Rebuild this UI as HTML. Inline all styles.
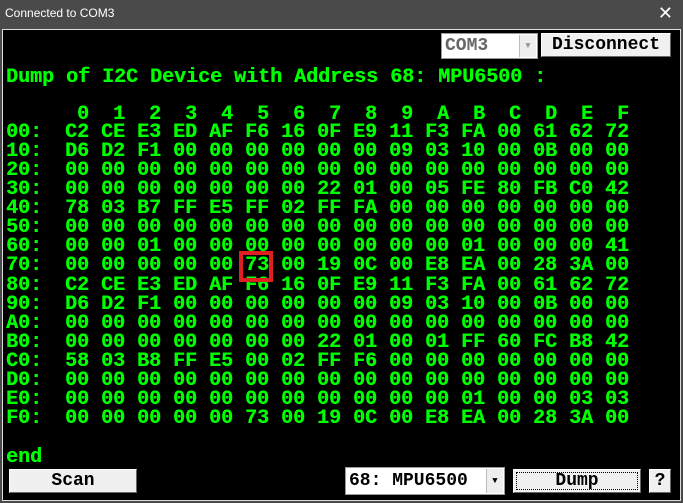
<!DOCTYPE html><html><head><style>
body{margin:0;width:683px;height:503px;background:#4a4a4a;position:relative;overflow:hidden;font-family:"Liberation Mono",monospace}
#t{position:absolute;left:5px;top:6px;color:#fff;font:12px "Liberation Sans",sans-serif}
#x{position:absolute;right:10px;top:3px;color:#fff;font:18px "Liberation Sans",sans-serif}
#f{position:absolute;left:2px;top:29px;width:677px;height:470px;border:1px solid #ddd;background:#000}
.g{position:absolute;color:#00ff00;font-weight:bold;font-size:20px;line-height:20px;white-space:pre;text-shadow:0.4px 0 0 #00ff00}
.btn{position:absolute;background:#f0f0f0;border:1px solid #fff;border-right-color:#666;border-bottom-color:#666;font:bold 18px "Liberation Mono",monospace;text-align:center;color:#000;box-sizing:border-box}
.cb{position:absolute;background:#fff;border:1px solid #999;font:bold 18px "Liberation Mono",monospace;box-sizing:border-box;padding-left:3px}
.ar{position:absolute;right:1px;top:1px;bottom:1px;width:16px;background:#eee;border-left:1px solid #bbb;font-size:9px;text-align:center}
</style></head><body>
<div id="t">Connected to COM3</div><div id="x">✕</div>
<div id="f"></div>
<div class="cb" style="left:441px;top:33px;width:97px;height:26px;line-height:24px;color:#666">COM3<div class="ar" style="line-height:22px;color:#999">▼</div></div>
<div class="btn" style="left:541px;top:33px;width:130px;height:24px;line-height:22px">Disconnect</div>
<div class="g" style="left:6px;top:68px">Dump of I2C Device with Address 68: MPU6500 :</div>
<div id="grid"></div>
<div style="position:absolute;left:239px;top:251px;width:26px;height:23px;border:4px solid #e02020"></div>
<div class="g" style="left:6px;top:448px">end</div>
<div class="btn" style="left:9px;top:469px;width:128px;height:24px;line-height:22px">Scan</div>
<div class="cb" style="left:345px;top:467px;width:160px;height:28px;line-height:26px">68: MPU6500<div class="ar" style="line-height:24px">▼</div></div>
<div class="btn" style="left:513px;top:469px;width:128px;height:24px;line-height:22px;outline:1px dotted #000;outline-offset:-4px">Dump</div>
<div class="btn" style="left:649px;top:469px;width:22px;height:24px;line-height:22px">?</div>
<script>
var d=[
"C2 CE E3 ED AF F6 16 0F E9 11 F3 FA 00 61 62 72",
"D6 D2 F1 00 00 00 00 00 00 09 03 10 00 0B 00 00",
"00 00 00 00 00 00 00 00 00 00 00 00 00 00 00 00",
"00 00 00 00 00 00 00 22 01 00 05 FE 80 FB C0 42",
"78 03 B7 FF E5 FF 02 FF FA 00 00 00 00 00 00 00",
"00 00 00 00 00 00 00 00 00 00 00 00 00 00 00 00",
"00 00 01 00 00 00 00 00 00 00 00 01 00 00 00 41",
"00 00 00 00 00 73 00 19 0C 00 E8 EA 00 28 3A 00",
"C2 CE E3 ED AF F6 16 0F E9 11 F3 FA 00 61 62 72",
"D6 D2 F1 00 00 00 00 00 00 09 03 10 00 0B 00 00",
"00 00 00 00 00 00 00 00 00 00 00 00 00 00 00 00",
"00 00 00 00 00 00 00 22 01 00 01 FF 60 FC B8 42",
"58 03 B8 FF E5 00 02 FF F6 00 00 00 00 00 00 00",
"00 00 00 00 00 00 00 00 00 00 00 00 00 00 00 00",
"00 00 00 00 00 00 00 00 00 00 00 01 00 00 03 03",
"00 00 00 00 00 73 00 19 0C 00 E8 EA 00 28 3A 00"];
var h="0123456789ABCDEF",s="";
for(var i=0;i<16;i++)s+='<div class="g" style="left:'+(77+36*i)+'px;top:105px">'+h[i]+'</div>';
for(var r=0;r<16;r++){var y=123+r*19.07;s+='<div class="g" style="left:6px;top:'+y+'px">'+h[r]+'0:</div>';
var v=d[r].split(" ");for(var i=0;i<16;i++)s+='<div class="g" style="left:'+(65+36*i)+'px;top:'+y+'px">'+v[i]+'</div>';}
document.getElementById("grid").innerHTML=s;
</script>
</body></html>
